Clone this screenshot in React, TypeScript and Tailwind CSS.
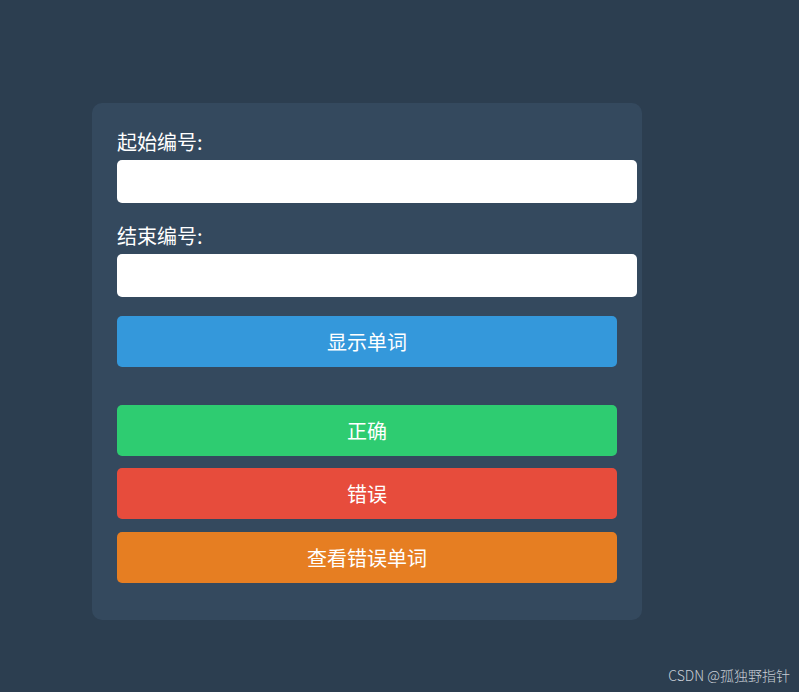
export default function App() {
  const font = { fontFamily: '"Microsoft YaHei", "Noto Sans CJK SC", "Noto Sans", sans-serif' }
  return (
    <div className="relative h-[692px] w-full overflow-hidden bg-[#2c3e50] pt-[103px] pl-[92px]" style={font}>
      <div className="w-[550px] rounded-[10px] bg-[#34495e] px-[25px] pt-[25px] pb-[37px]">
        <label className="mb-[4px] block text-[20px] leading-[28px] text-white">起始编号:</label>
        <input className="mb-[19px] block h-[43px] w-[520px] rounded-[5px] bg-white outline-none" />
        <label className="mb-[4px] block text-[20px] leading-[28px] text-white">结束编号:</label>
        <input className="mb-[19px] block h-[43px] w-[520px] rounded-[5px] bg-white outline-none" />
        <button className="block h-[51px] w-[500px] rounded-[5px] bg-[#3498db] text-[20px] text-white">
          显示单词
        </button>
        <div className="h-[38px]" />
        <div className="flex flex-col">
          <button className="block h-[51px] w-[500px] rounded-[5px] bg-[#2ecc71] text-[20px] text-white">
            正确
          </button>
          <button className="mt-[12px] block h-[51px] w-[500px] rounded-[5px] bg-[#e74c3c] text-[20px] text-white">
            错误
          </button>
          <button className="mt-[13px] block h-[51px] w-[500px] rounded-[5px] bg-[#e67e22] text-[20px] text-white">
            查看错误单词
          </button>
        </div>
      </div>
      <div className="absolute right-[9px] bottom-[6px] text-[14px] font-light text-[#c9ced6]">CSDN @孤独野指针</div>
    </div>
  )
}
